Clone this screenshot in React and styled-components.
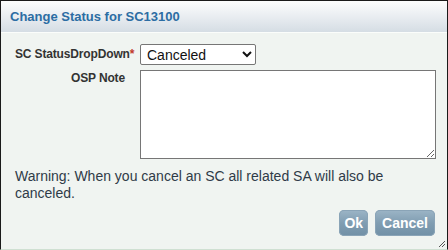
import React, { useState } from "react";
import styled, { createGlobalStyle } from "styled-components";

const GlobalStyle = createGlobalStyle`
  html, body {
    margin: 0;
    padding: 0;
    background: #ffffff;
  }
  * {
    box-sizing: border-box;
  }
`;

const Dialog = styled.div`
  width: 448px;
  height: 250px;
  border: 1px solid #1a1a1a;
  border-bottom-color: #cfe0d2;
  background: #f0f4f1;
  display: flex;
  flex-direction: column;
  font-family: "Liberation Sans", Arial, sans-serif;
  position: relative;
`;

const TitleBar = styled.div`
  height: 32px;
  padding: 0 0 0 9px;
  display: flex;
  align-items: center;
  background: linear-gradient(to bottom, #fcfdfd 0%, #e9edf1 50%, #d5dde4 100%);
  border-bottom: 1px solid #fbfdfb;
`;

const Title = styled.h1`
  margin: 0;
  font-size: 13px;
  font-weight: bold;
  color: #2c6da3;
`;

const Body = styled.div`
  flex: 1;
  padding: 11px 12px 0 14px;
  display: flex;
  flex-direction: column;
`;

const FieldRow = styled.div`
  display: grid;
  grid-template-columns: 120px 1fr;
  column-gap: 5px;
  align-items: start;
  margin-bottom: ${(props) => props.gap || "4px"};
`;

const Label = styled.label`
  font-size: 12px;
  font-weight: bold;
  color: #333;
  text-align: right;
  padding-top: ${(props) => props.top || "4px"};
  padding-right: ${(props) => props.right || "0"};
  white-space: nowrap;
  letter-spacing: -0.15px;
`;

const Required = styled.span`
  color: #c0392b;
`;

const Select = styled.select`
  width: 116px;
  height: 21px;
  font-family: "Liberation Sans", Arial, sans-serif;
  font-size: 14px;
  color: #111;
  border: 1px solid #767676;
  border-radius: 2px;
  background: #fff;
  padding: 0 2px;
`;

const TextArea = styled.textarea`
  width: 296px;
  height: 89px;
  border: 1px solid #767676;
  background: #fff;
  font-family: "Liberation Sans", Arial, sans-serif;
  font-size: 13px;
  resize: both;
  margin: 0;
`;

const Warning = styled.p`
  margin: 5px 0 0 0;
  font-size: 14px;
  line-height: 17px;
  color: #2f3b48;
`;

const Actions = styled.div`
  display: flex;
  justify-content: flex-end;
  gap: 7px;
  margin-top: 8px;
`;

const Button = styled.button`
  height: 26px;
  padding: 0 ${(props) => props.pad || "5px"};
  border: none;
  border-radius: 5px;
  background: linear-gradient(to bottom, #9cb5c6 0%, #809db2 50%, #7190a6 100%);
  box-shadow: inset 0 0 0 1px #8aa4b7;
  color: #fff;
  font-family: "Liberation Sans", Arial, sans-serif;
  font-size: 14px;
  font-weight: bold;
  cursor: pointer;
`;

const Grip = styled.svg`
  position: absolute;
  right: 1px;
  bottom: 1px;
`;

export default function App() {
  const [status, setStatus] = useState("Canceled");
  const [note, setNote] = useState("");

  return (
    <>
      <GlobalStyle />
      <Dialog>
        <TitleBar>
          <Title>Change Status for SC13100</Title>
        </TitleBar>
        <Body>
          <FieldRow gap="5px">
            <Label htmlFor="status" top="3px" right="2px">
              SC StatusDropDown<Required>*</Required>
            </Label>
            <Select
              id="status"
              value={status}
              onChange={(e) => setStatus(e.target.value)}
            >
              <option>Open</option>
              <option>Closed</option>
              <option>Canceled</option>
            </Select>
          </FieldRow>
          <FieldRow>
            <Label htmlFor="note" top="1px" right="10px">
              OSP Note
            </Label>
            <TextArea
              id="note"
              value={note}
              onChange={(e) => setNote(e.target.value)}
            />
          </FieldRow>
          <Warning>
            Warning: When you cancel an SC all related SA will also be
            canceled.
          </Warning>
          <Actions>
            <Button pad="5px">Ok</Button>
            <Button pad="7px">Cancel</Button>
          </Actions>
        </Body>
        <Grip width="10" height="10" viewBox="0 0 10 10">
          <path d="M9 3 L3 9 M9 6 L6 9" stroke="#555" strokeWidth="1" />
        </Grip>
      </Dialog>
    </>
  );
}
